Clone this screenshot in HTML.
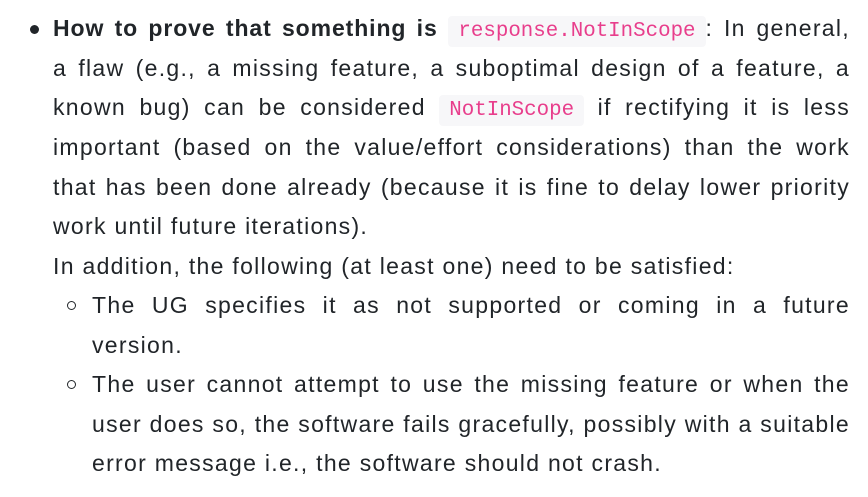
<!DOCTYPE html>
<html><head><meta charset="utf-8"><style>
html,body{margin:0;padding:0;background:#fff;width:868px;height:497px;overflow:hidden}
body{font-family:"Liberation Sans",sans-serif;font-size:23px;letter-spacing:1.3px;color:#212529;position:relative}
.l{position:absolute;height:39.5px;line-height:39.5px;white-space:nowrap}
.j{text-align:justify;text-align-last:justify;white-space:normal}
b{letter-spacing:0.9px}
code{font-family:"Liberation Mono",monospace;font-size:20.8px;letter-spacing:0;color:#e83e8c;background:#f7f7f9;border-radius:4px;padding:4px 10px}
.dot{position:absolute;left:30px;top:25px;width:9px;height:9px;border-radius:50%;background:#212529}
.c{position:absolute;left:67px;width:7px;height:7px;border:1.5px solid #212529;border-radius:50%}
</style></head><body>
<div class="dot"></div>
<div class="l j" style="left:53px;width:797px;top:9px"><b>How to prove that something is</b> <code>response.NotInScope</code>: In general,</div>
<div class="l j" style="left:53px;width:797px;top:49px">a flaw (e.g., a missing feature, a suboptimal design of a feature, a</div>
<div class="l j" style="left:53px;width:797px;top:88px">known bug) can be considered <code>NotInScope</code> if rectifying it is less</div>
<div class="l j" style="left:53px;width:797px;top:128px">important (based on the value/effort considerations) than the work</div>
<div class="l j" style="left:53px;width:797px;top:168px">that has been done already (because it is fine to delay lower priority</div>
<div class="l" style="left:53px;top:207px">work until future iterations).</div>
<div class="l" style="left:53px;top:247px">In addition, the following (at least one) need to be satisfied:</div>
<div class="c" style="top:301px"></div>
<div class="l j" style="left:92px;width:758px;top:286px">The UG specifies it as not supported or coming in a future</div>
<div class="l" style="left:92px;top:326px">version.</div>
<div class="c" style="top:380px"></div>
<div class="l j" style="left:92px;width:758px;top:365px">The user cannot attempt to use the missing feature or when the</div>
<div class="l j" style="left:92px;width:758px;top:405px">user does so, the software fails gracefully, possibly with a suitable</div>
<div class="l" style="left:92px;top:444px">error message i.e., the software should not crash.</div>
</body></html>
